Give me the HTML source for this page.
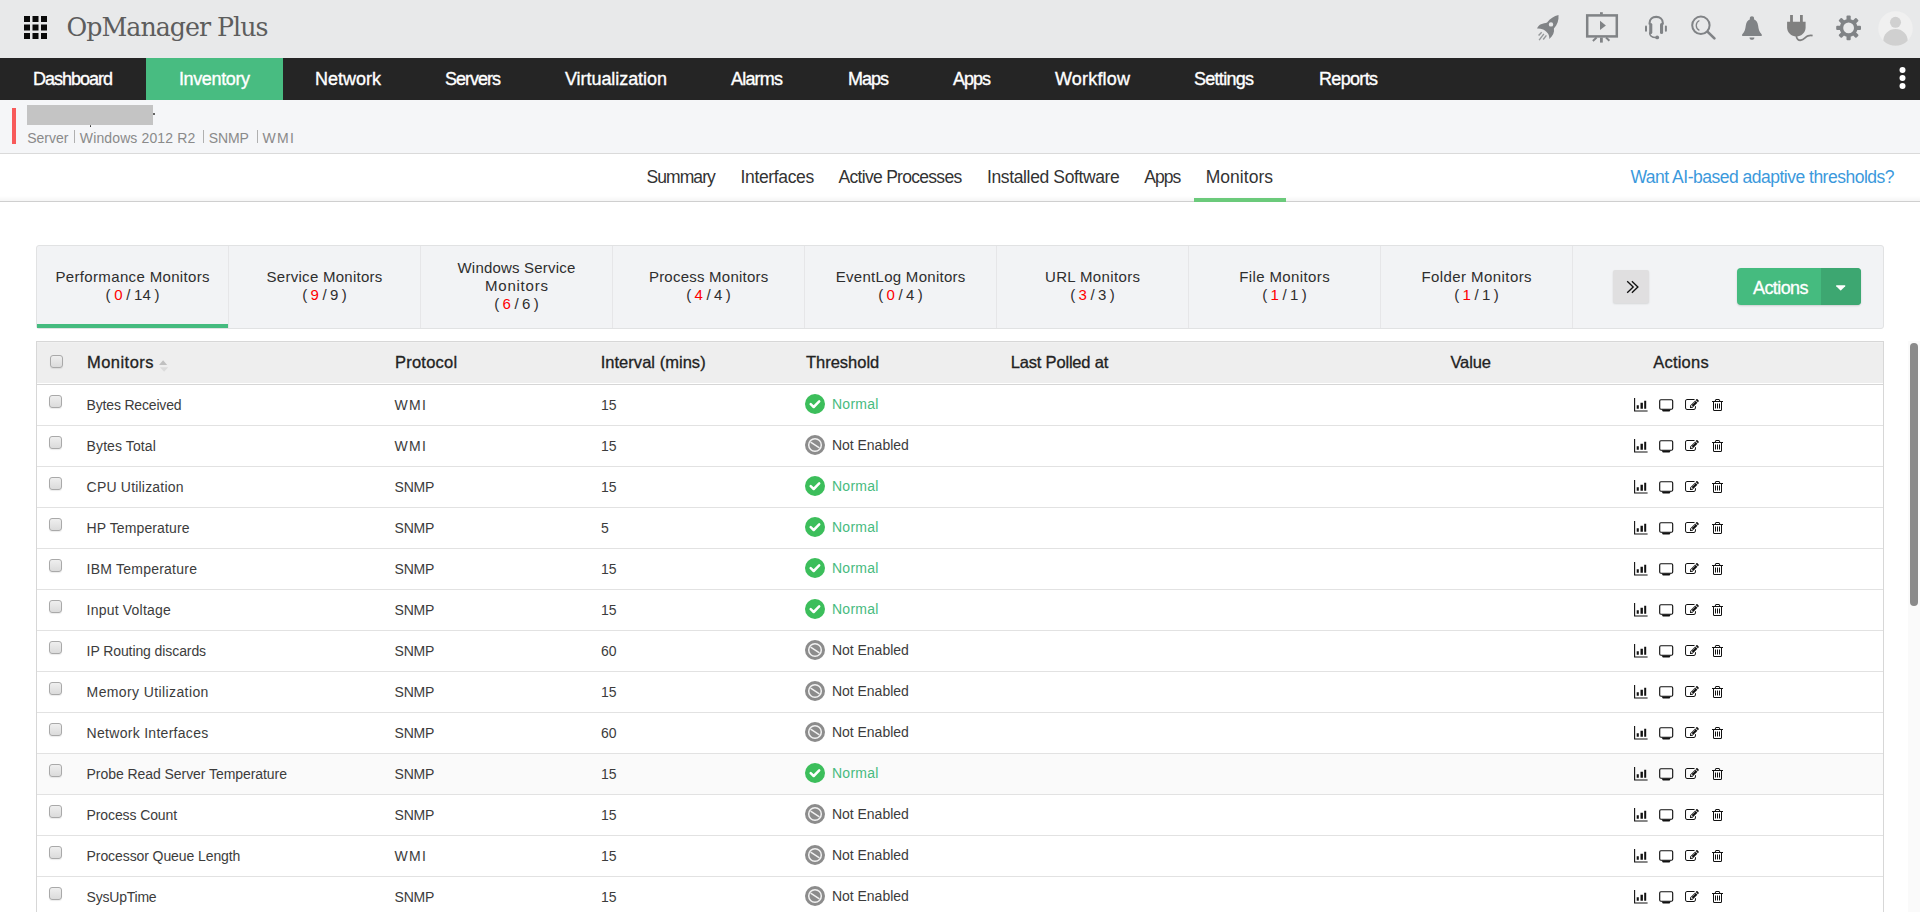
<!DOCTYPE html>
<html lang="en">
<head>
<meta charset="utf-8">
<title>OpManager Plus - Monitors</title>
<style>
*{box-sizing:border-box;margin:0;padding:0}
html,body{width:1920px;height:912px;overflow:hidden;background:#fff}
body{position:relative;font-family:"Liberation Sans",sans-serif;color:#333;font-size:14px}
.t{position:absolute;white-space:pre;display:block}
svg{position:absolute;display:block;overflow:visible}
#top{position:absolute;left:0;top:0;width:1920px;height:58px;background:#e8e9ea}
#nav{position:absolute;left:0;top:58px;width:1920px;height:42px;background:#252525}
#nav .on{position:absolute;left:146px;top:0;width:137px;height:42px;background:#48bc81}
#nav .t{color:#fff;-webkit-text-stroke:0.35px #fff}
#dev{position:absolute;left:0;top:100px;width:1920px;height:54px;background:#f5f6f8;border-bottom:1px solid #dadada}
#dev .bar{position:absolute;left:12px;top:8px;width:4px;height:36px;background:#f85a5a}
#dev .name{position:absolute;left:27px;top:5px;width:126px;height:20px;background:#c4c4c4}
#dev i{position:absolute;top:30px;width:1px;height:13px;background:#b0b0b0}
#dev u{position:absolute;width:1.5px;height:1.5px;background:#333;border-radius:1px}
#tabs{position:absolute;left:0;top:154px;width:1920px;height:48px;background:linear-gradient(#fff 0,#fff 42px,#f5f5f5 47px);border-bottom:1px solid #cfcfcf}
#tabs .ul{position:absolute;left:1194px;top:44px;width:92px;height:4px;background:#6bca7b}
#cat{position:absolute;left:36px;top:245px;width:1848px;height:84px;background:#f2f3f5;border:1px solid #e1e2e3;border-radius:3px}
#cat .c{position:absolute;top:0;width:192px;height:82px;border-right:1px solid #e6e6e8}
#cat .act{position:absolute;left:0;top:78px;width:191px;height:4px;background:#45bb7f}
#cat .t{color:#2e2e2e}
#cat .r{color:#f00}
#more{position:absolute;left:1576px;top:24px;width:36px;height:33px;background:#e0dfe0;border-radius:2px;box-shadow:0 1px 2px rgba(0,0,0,.12)}
#btn{position:absolute;left:1700px;top:22px;width:124px;height:37px;background:#45bb7f;border-radius:4px;overflow:hidden;box-shadow:0 1px 2px rgba(0,0,0,.15)}
#btn .dd{position:absolute;left:84px;top:0;width:40px;height:37px;background:#3da771}
#tbl{position:absolute;left:36px;top:341px;width:1848px;height:571px;overflow:hidden;border:1px solid #d7d7d7;border-bottom:0}
#th{position:absolute;left:0;top:0;width:1846px;height:43px;background:#eeeeee;border-bottom:1px solid #d6d6d6;box-shadow:inset 0 -1px 0 #fff,inset 0 1px 0 #f1f1f1}
#th .t{color:#222;-webkit-text-stroke:0.3px #222}
.row{position:absolute;left:0;width:1846px;height:41px;border-bottom:1px solid #e2e2e2}
.row.hov{background:#fafafa}
.cb{position:absolute;width:13px;height:13px;border:1px solid #a9a9a9;border-radius:3px;background:linear-gradient(#efefef,#dbdbdb);box-shadow:0 1px 1px rgba(0,0,0,.08)}
.ok .t{color:#47bb80}
#sb{position:absolute;left:1908px;top:341px;width:12px;height:571px;background:#fafafa}
#sb b{position:absolute;left:2px;top:2px;width:8px;height:263px;border-radius:4px;background:#8a8a8a}
</style>
</head>
<body>
<div id="top">
<svg style="left:24px;top:16px" width="23" height="23" viewBox="0 0 23 23"><g fill="#0a0a0a"><rect x="0" y="0" width="6" height="6"/><rect x="8.5" y="0" width="6" height="6"/><rect x="17" y="0" width="6" height="6"/><rect x="0" y="8.5" width="6" height="6"/><rect x="8.5" y="8.5" width="6" height="6"/><rect x="17" y="8.5" width="6" height="6"/><rect x="0" y="17" width="6" height="6"/><rect x="8.5" y="17" width="6" height="6"/><rect x="17" y="17" width="6" height="6"/></g></svg>
<span class="t" style="left:66.5px;top:13px;font-size:25.3px;line-height:29px;letter-spacing:-1.0px;color:#5d5d5d;font-family:'DejaVu Serif','Liberation Serif',serif;">OpManager Plus</span>
<svg style="left:1530px;top:8px" width="40" height="40" viewBox="0 0 40 40"><path fill="#808386" fill-rule="evenodd" d="M28.5 7C28.9 12 27.5 16.5 23.9 20.6C24.6 24.2 23 28 19.3 31.1C19.5 28.2 18.6 26.2 17.5 25C16 23.1 14.2 21.9 13.2 21.5C11 20.7 9 20.5 7 20.6C8 18.1 9.5 16.6 11 16.2C13 15.4 15.5 15.1 17.1 14.5C20 10.5 24 8 28.5 7ZM21 14.2A2.2 2.2 0 1 0 21 18.6A2.2 2.2 0 1 0 21 14.2Z"/><g stroke="#808386" stroke-width="1.4" stroke-opacity=".8"><path d="M11.7 24.2L8.6 27.5"/><path d="M13.9 25.8L9.1 32.1"/><path d="M16.4 27.4L13.2 31.5"/></g></svg>
<svg style="left:1580px;top:8px" width="50" height="40" viewBox="0 0 50 40"><rect x="7.2" y="7.4" width="29.6" height="21" fill="none" stroke="#808386" stroke-width="2.5"/><rect x="20" y="4.2" width="2.8" height="2.4" fill="#808386"/><rect x="20" y="29.6" width="2.8" height="5" fill="#808386"/><path d="M16.6 29.6L12.9 32.9M26 29.6L29.4 32.8" stroke="#808386" stroke-width="2"/><path d="M20 12.7V22.1L25.9 17.4Z" fill="#808386"/></svg>
<svg style="left:1636px;top:8px" width="40" height="40" viewBox="0 0 40 40"><path d="M13.6 16.5V15C13.6 11.2 16.4 8.9 20.2 8.9C24 8.9 26.8 11.2 26.8 15V16.5" fill="none" stroke="#808386" stroke-width="2.1"/><rect x="13.2" y="14.9" width="3.1" height="11" rx="1.5" fill="#808386"/><rect x="24" y="14.9" width="3.1" height="11" rx="1.5" fill="#808386"/><rect x="9" y="17.5" width="2" height="6.2" rx="1" fill="#808386"/><rect x="28.9" y="17.5" width="2" height="6.2" rx="1" fill="#808386"/><path d="M13.6 24.5C13.6 28 15.5 29.5 20 29.5" fill="none" stroke="#808386" stroke-width="1.5"/><circle cx="21.2" cy="29.4" r="1.9" fill="#808386"/></svg>
<svg style="left:1684px;top:8px" width="40" height="40" viewBox="0 0 40 40"><circle cx="16.9" cy="17.3" r="8.7" fill="none" stroke="#808386" stroke-width="2"/><path d="M23.7 23.9L30.4 30.4" stroke="#808386" stroke-width="2.7" stroke-linecap="round"/><path d="M15.4 12.5C11.2 14.5 11.2 20.4 15.4 22.4" fill="none" stroke="#808386" stroke-width="1.3"/></svg>
<svg style="left:1732px;top:8px" width="40" height="40" viewBox="0 0 40 40"><path fill="#808386" d="M19.95 8.3C21.2 8.3 22.1 9.2 22.1 10.4C22.1 10.7 22 11 21.9 11.3C24.3 12.2 25.6 14.4 26.1 17.5C26.6 21 27 23.8 29.6 26.2C30 26.6 29.9 28.1 29.2 28.1H10.7C10 28.1 9.9 26.6 10.3 26.2C12.9 23.8 13.3 21 13.8 17.5C14.3 14.4 15.6 12.2 18 11.3C17.9 11 17.8 10.7 17.8 10.4C17.8 9.2 18.7 8.3 19.95 8.3Z"/><path fill="#808386" d="M17.5 29.4H22.4C22.4 30.8 21.4 31.7 19.95 31.7C18.5 31.7 17.5 30.8 17.5 29.4Z"/></svg>
<svg style="left:1782px;top:8px" width="40" height="40" viewBox="0 0 40 40"><rect x="8.1" y="7" width="2.8" height="7.5" fill="#808080"/><rect x="18" y="7" width="2.8" height="7.5" fill="#808080"/><path fill="#808080" d="M5.1 13.8H23.6V19.5C23.6 24.6 19.5 28.4 14.35 28.4C9.2 28.4 5.1 24.6 5.1 19.5Z"/><path d="M14.3 27.5C14.5 31 16.5 32.6 19 32.2C22 31.7 23.5 28.6 26 27.8C28 27.2 29.5 27.3 30.6 27.6" fill="none" stroke="#808080" stroke-width="1.8"/></svg>
<svg style="left:1828px;top:8px" width="40" height="40" viewBox="0 0 40 40"><g transform="translate(20.6 19.9)" fill="#808386"><rect x="-2.1" y="-12.4" width="4.2" height="5.5" rx="1" transform="rotate(0)"/><rect x="-2.1" y="-12.4" width="4.2" height="5.5" rx="1" transform="rotate(45)"/><rect x="-2.1" y="-12.4" width="4.2" height="5.5" rx="1" transform="rotate(90)"/><rect x="-2.1" y="-12.4" width="4.2" height="5.5" rx="1" transform="rotate(135)"/><rect x="-2.1" y="-12.4" width="4.2" height="5.5" rx="1" transform="rotate(180)"/><rect x="-2.1" y="-12.4" width="4.2" height="5.5" rx="1" transform="rotate(225)"/><rect x="-2.1" y="-12.4" width="4.2" height="5.5" rx="1" transform="rotate(270)"/><rect x="-2.1" y="-12.4" width="4.2" height="5.5" rx="1" transform="rotate(315)"/></g><circle cx="20.6" cy="19.9" r="7.2" fill="none" stroke="#808386" stroke-width="3.6"/></svg>
<svg style="left:1878px;top:11px" width="35" height="35" viewBox="0 0 35 35"><clipPath id="av"><circle cx="17.5" cy="17.5" r="17.3"/></clipPath><circle cx="17.5" cy="17.5" r="17.3" fill="#f0f0f0"/><g clip-path="url(#av)" fill="#d0d0d0"><circle cx="17.5" cy="11.3" r="5.5"/><ellipse cx="17.5" cy="29.8" rx="12.2" ry="11.7"/></g></svg>
</div>
<div id="nav"><div class="on"></div>
<span class="t" style="left:33px;top:11px;font-size:18px;line-height:20px;letter-spacing:-1.01px;">Dashboard</span>
<span class="t" style="left:179px;top:11px;font-size:18px;line-height:20px;letter-spacing:-0.38px;">Inventory</span>
<span class="t" style="left:315px;top:11px;font-size:18px;line-height:20px;">Network</span>
<span class="t" style="left:445px;top:11px;font-size:18px;line-height:20px;letter-spacing:-1.0px;">Servers</span>
<span class="t" style="left:565px;top:11px;font-size:18px;line-height:20px;letter-spacing:-0.06px;">Virtualization</span>
<span class="t" style="left:731px;top:11px;font-size:18px;line-height:20px;letter-spacing:-0.8px;">Alarms</span>
<span class="t" style="left:848px;top:11px;font-size:18px;line-height:20px;letter-spacing:-1.01px;">Maps</span>
<span class="t" style="left:953px;top:11px;font-size:18px;line-height:20px;letter-spacing:-1.01px;">Apps</span>
<span class="t" style="left:1055px;top:11px;font-size:18px;line-height:20px;letter-spacing:0.19px;">Workflow</span>
<span class="t" style="left:1194px;top:11px;font-size:18px;line-height:20px;letter-spacing:-0.72px;">Settings</span>
<span class="t" style="left:1319px;top:11px;font-size:18px;line-height:20px;letter-spacing:-0.67px;">Reports</span>
<svg style="left:1899px;top:8px" width="7" height="24" viewBox="0 0 7 24"><g fill="#fff"><circle cx="3.5" cy="3.9" r="3"/><circle cx="3.5" cy="12" r="3"/><circle cx="3.5" cy="20.1" r="3"/></g></svg>
</div>
<div id="dev"><div class="bar"></div><div class="name"></div><u style="left:153.3px;top:13.2px"></u><u style="left:89.5px;top:25px"></u>
<span class="t" style="left:27.3px;top:30px;font-size:14px;line-height:16px;letter-spacing:-0.03px;color:#8a8a8a;">Server</span>
<span class="t" style="left:79.8px;top:30px;font-size:14px;line-height:16px;letter-spacing:0.13px;color:#8a8a8a;">Windows 2012 R2</span>
<span class="t" style="left:208.8px;top:30px;font-size:14px;line-height:16px;letter-spacing:-0.15px;color:#8a8a8a;">SNMP</span>
<span class="t" style="left:262.6px;top:30px;font-size:14px;line-height:16px;letter-spacing:1.27px;color:#8a8a8a;">WMI</span>
<i style="left:74px"></i>
<i style="left:203px"></i>
<i style="left:257px"></i>
</div>
<div id="tabs">
<span class="t" style="left:646.4px;top:13px;font-size:17.5px;line-height:20px;letter-spacing:-0.91px;color:#333;">Summary</span>
<span class="t" style="left:740.6px;top:13px;font-size:17.5px;line-height:20px;letter-spacing:-0.36px;color:#333;">Interfaces</span>
<span class="t" style="left:838.6px;top:13px;font-size:17.5px;line-height:20px;letter-spacing:-0.71px;color:#333;">Active Processes</span>
<span class="t" style="left:987px;top:13px;font-size:17.5px;line-height:20px;letter-spacing:-0.37px;color:#333;">Installed Software</span>
<span class="t" style="left:1144.3px;top:13px;font-size:17.5px;line-height:20px;letter-spacing:-0.96px;color:#333;">Apps</span>
<span class="t" style="left:1205.7px;top:13px;font-size:17.5px;line-height:20px;letter-spacing:0.03px;color:#333;">Monitors</span>
<span class="t" style="left:1630.5px;top:13px;font-size:17.5px;line-height:20px;letter-spacing:-0.5px;color:#3b99dc;">Want AI-based adaptive thresholds?</span>
<div class="ul"></div></div>
<div id="cat">
<div class="c" style="left:0px">
<span class="t" style="left:18.4px;top:22px;font-size:15px;line-height:17px;letter-spacing:0.35px;">Performance Monitors</span>
<span class="t" style="left:68.5px;top:40px;font-size:15px;line-height:17px;">(</span>
<span class="t r" style="left:77.2px;top:40px;font-size:15px;line-height:17px;">0</span>
<span class="t" style="left:89.2px;top:40px;font-size:15px;line-height:17px;">/</span>
<span class="t" style="left:97.1px;top:40px;font-size:15px;line-height:17px;">14</span>
<span class="t" style="left:117.5px;top:40px;font-size:15px;line-height:17px;">)</span>
</div>
<div class="c" style="left:192px">
<span class="t" style="left:37.6px;top:22px;font-size:15px;line-height:17px;letter-spacing:0.27px;">Service Monitors</span>
<span class="t" style="left:73.2px;top:40px;font-size:15px;line-height:17px;">(</span>
<span class="t r" style="left:81.6px;top:40px;font-size:15px;line-height:17px;">9</span>
<span class="t" style="left:93.4px;top:40px;font-size:15px;line-height:17px;">/</span>
<span class="t" style="left:101.0px;top:40px;font-size:15px;line-height:17px;">9</span>
<span class="t" style="left:112.8px;top:40px;font-size:15px;line-height:17px;">)</span>
</div>
<div class="c" style="left:384px">
<span class="t" style="left:36.5px;top:13px;font-size:15px;line-height:17px;letter-spacing:0.2px;">Windows Service</span>
<span class="t" style="left:64.0px;top:31px;font-size:15px;line-height:17px;letter-spacing:0.77px;">Monitors</span>
<span class="t" style="left:73.2px;top:49px;font-size:15px;line-height:17px;">(</span>
<span class="t r" style="left:81.6px;top:49px;font-size:15px;line-height:17px;">6</span>
<span class="t" style="left:93.4px;top:49px;font-size:15px;line-height:17px;">/</span>
<span class="t" style="left:101.0px;top:49px;font-size:15px;line-height:17px;">6</span>
<span class="t" style="left:112.8px;top:49px;font-size:15px;line-height:17px;">)</span>
</div>
<div class="c" style="left:576px">
<span class="t" style="left:35.9px;top:22px;font-size:15px;line-height:17px;letter-spacing:0.23px;">Process Monitors</span>
<span class="t" style="left:73.2px;top:40px;font-size:15px;line-height:17px;">(</span>
<span class="t r" style="left:81.6px;top:40px;font-size:15px;line-height:17px;">4</span>
<span class="t" style="left:93.4px;top:40px;font-size:15px;line-height:17px;">/</span>
<span class="t" style="left:101.0px;top:40px;font-size:15px;line-height:17px;">4</span>
<span class="t" style="left:112.8px;top:40px;font-size:15px;line-height:17px;">)</span>
</div>
<div class="c" style="left:768px">
<span class="t" style="left:30.8px;top:22px;font-size:15px;line-height:17px;letter-spacing:0.28px;">EventLog Monitors</span>
<span class="t" style="left:73.2px;top:40px;font-size:15px;line-height:17px;">(</span>
<span class="t r" style="left:81.6px;top:40px;font-size:15px;line-height:17px;">0</span>
<span class="t" style="left:93.4px;top:40px;font-size:15px;line-height:17px;">/</span>
<span class="t" style="left:101.0px;top:40px;font-size:15px;line-height:17px;">4</span>
<span class="t" style="left:112.8px;top:40px;font-size:15px;line-height:17px;">)</span>
</div>
<div class="c" style="left:960px">
<span class="t" style="left:48.0px;top:22px;font-size:15px;line-height:17px;letter-spacing:0.35px;">URL Monitors</span>
<span class="t" style="left:73.2px;top:40px;font-size:15px;line-height:17px;">(</span>
<span class="t r" style="left:81.6px;top:40px;font-size:15px;line-height:17px;">3</span>
<span class="t" style="left:93.4px;top:40px;font-size:15px;line-height:17px;">/</span>
<span class="t" style="left:101.0px;top:40px;font-size:15px;line-height:17px;">3</span>
<span class="t" style="left:112.8px;top:40px;font-size:15px;line-height:17px;">)</span>
</div>
<div class="c" style="left:1152px">
<span class="t" style="left:50.2px;top:22px;font-size:15px;line-height:17px;letter-spacing:0.39px;">File Monitors</span>
<span class="t" style="left:73.2px;top:40px;font-size:15px;line-height:17px;">(</span>
<span class="t r" style="left:81.6px;top:40px;font-size:15px;line-height:17px;">1</span>
<span class="t" style="left:93.4px;top:40px;font-size:15px;line-height:17px;">/</span>
<span class="t" style="left:101.0px;top:40px;font-size:15px;line-height:17px;">1</span>
<span class="t" style="left:112.8px;top:40px;font-size:15px;line-height:17px;">)</span>
</div>
<div class="c" style="left:1344px">
<span class="t" style="left:40.4px;top:22px;font-size:15px;line-height:17px;letter-spacing:0.43px;">Folder Monitors</span>
<span class="t" style="left:73.2px;top:40px;font-size:15px;line-height:17px;">(</span>
<span class="t r" style="left:81.6px;top:40px;font-size:15px;line-height:17px;">1</span>
<span class="t" style="left:93.4px;top:40px;font-size:15px;line-height:17px;">/</span>
<span class="t" style="left:101.0px;top:40px;font-size:15px;line-height:17px;">1</span>
<span class="t" style="left:112.8px;top:40px;font-size:15px;line-height:17px;">)</span>
</div>
<div class="act"></div>
<div id="more"><svg style="left:0;top:0" width="36" height="33" viewBox="0 0 36 33"><path d="M14.2 11.2L20.2 16.9L14.2 22.7M18.9 11.2L24.9 16.9L18.9 22.7" fill="none" stroke="#111" stroke-width="1.35"/></svg></div>
<div id="btn"><div class="dd"></div><span class="t" style="left:16px;top:10px;font-size:18px;line-height:20px;letter-spacing:-0.59px;color:#fff;-webkit-text-stroke:0.3px #fff;">Actions</span><svg style="left:98.5px;top:17px" width="9.4" height="5.6" viewBox="0 0 1024 576"><path fill="#fff" d="M1024 64C1024 29 995 0 960 0H64C29 0 0 29 0 64C0 81 7 97 19 109L467 557C479 569 495 576 512 576C529 576 545 569 557 557L1005 109C1017 97 1024 81 1024 64Z"/></svg></div>
</div>
<div id="tbl"><div id="th">
<div class="cb" style="left:13px;top:13px"></div>
<span class="t" style="left:49.9px;top:11px;font-size:16.5px;line-height:18px;letter-spacing:0.49px;">Monitors</span>
<span class="t" style="left:357.9px;top:11px;font-size:16.5px;line-height:18px;letter-spacing:0.25px;">Protocol</span>
<span class="t" style="left:563.7px;top:11px;font-size:16.5px;line-height:18px;letter-spacing:0.03px;">Interval (mins)</span>
<span class="t" style="left:769px;top:11px;font-size:16.5px;line-height:18px;letter-spacing:-0.02px;">Threshold</span>
<span class="t" style="left:973.8px;top:11px;font-size:16.5px;line-height:18px;letter-spacing:-0.19px;">Last Polled at</span>
<span class="t" style="left:1413.4px;top:11px;font-size:16.5px;line-height:18px;letter-spacing:-0.1px;">Value</span>
<span class="t" style="left:1616.2px;top:11px;font-size:16.5px;line-height:18px;letter-spacing:0.23px;">Actions</span>
<svg style="left:121.80000000000001px;top:18px" width="10" height="12" viewBox="0 0 10 12"><path d="M0 4.9L4.1 0.2L8.2 4.9Z" fill="#c0c0c0"/><path d="M1 7.2L5.1 11.8L9.2 7.2Z" fill="#dbdbdb"/></svg>
</div>
<div class="row ok" style="top:43px">
<div class="cb" style="left:12px;top:10px"></div>
<span class="t n" style="left:49.6px;top:12px;font-size:14px;line-height:16px;letter-spacing:-0.18px;color:#3c3c3c;">Bytes Received</span>
<span class="t n" style="left:357.5px;top:12px;font-size:14px;line-height:16px;letter-spacing:1.27px;color:#3c3c3c;">WMI</span>
<span class="t n" style="left:564px;top:12px;font-size:14px;line-height:16px;color:#3c3c3c;">15</span>
<svg style="left:768px;top:9px" width="20" height="20" viewBox="0 0 20 20"><circle cx="10" cy="10" r="10" fill="#3cbe5b"/><path d="M5.7 10.2L8.7 13L14.2 7.4" fill="none" stroke="#fff" stroke-width="2.5" stroke-linecap="round" stroke-linejoin="round"/></svg>
<span class="t" style="left:795px;top:11px;font-size:14px;line-height:16px;letter-spacing:0.25px;">Normal</span>
<svg style="left:1597px;top:13px" width="14" height="14" viewBox="0 0 14 14"><path d="M0.6 0.1V13H13.6" fill="none" stroke="#111" stroke-width="1.1"/><path fill="#111" d="M2.7 7.2H4.8V10.7H2.7ZM6.5 4.7H8.9V10.7H6.5ZM10.2 2.7H12.2V10.7H10.2Z"/></svg>
<svg style="left:1622px;top:13.6px" width="14.4" height="13" viewBox="0 0 14.4 13"><rect x="0.7" y="0.7" width="13" height="9.6" rx="1.2" fill="none" stroke="#111" stroke-width="1.15"/><path fill="#111" d="M2.6 10.6H11.8L10.6 12.4H3.8Z"/></svg>
<svg style="left:1648.4px;top:13.8px" width="13.9" height="10.9" viewBox="0 0 1784 1408"><path fill="#111" d="M888 1056H832V960H736V904L852 788L1004 940ZM1328 336C1337 345 1336 360 1327 369L977 719C968 728 953 729 944 720C935 711 936 696 945 687L1295 337C1304 328 1319 327 1328 336ZM1408 930C1408 917 1400 906 1388 901C1376 896 1363 898 1353 908L1289 972C1283 978 1280 986 1280 994V1120C1280 1208 1208 1280 1120 1280H288C200 1280 128 1208 128 1120V288C128 200 200 128 288 128H1120C1135 128 1150 130 1165 134C1176 138 1188 135 1197 126L1246 77C1254 69 1257 59 1255 48C1253 38 1246 29 1237 25C1200 8 1160 0 1120 0H288C129 0 0 129 0 288V1120C0 1279 129 1408 288 1408H1120C1279 1408 1408 1279 1408 1120ZM1312 192 640 864V1152H928L1600 480ZM1756 324C1793 287 1793 225 1756 188L1604 36C1567 -1 1505 -1 1468 36L1376 128L1664 416L1756 324Z"/></svg>
<svg style="left:1675px;top:13.8px" width="11" height="12" viewBox="0 0 1408 1536"><path fill="#111" d="M512 608C512 590 498 576 480 576H416C398 576 384 590 384 608V1184C384 1202 398 1216 416 1216H480C498 1216 512 1202 512 1184ZM768 608C768 590 754 576 736 576H672C654 576 640 590 640 608V1184C640 1202 654 1216 672 1216H736C754 1216 768 1202 768 1184ZM1024 608C1024 590 1010 576 992 576H928C910 576 896 590 896 608V1184C896 1202 910 1216 928 1216H992C1010 1216 1024 1202 1024 1184ZM1152 1332C1152 1380 1125 1408 1120 1408H288C283 1408 256 1380 256 1332V384H1152V1332ZM480 256 529 139C532 135 540 129 546 128H863C868 129 877 135 880 139L928 256ZM1408 288C1408 270 1394 256 1376 256H1067L997 89C977 40 917 0 864 0H544C491 0 431 40 411 89L341 256H32C14 256 0 270 0 288V352C0 370 14 384 32 384H128V1336C128 1446 200 1536 288 1536H1120C1208 1536 1280 1442 1280 1332V384H1376C1394 384 1408 370 1408 352Z"/></svg>
</div>
<div class="row" style="top:84px">
<div class="cb" style="left:12px;top:10px"></div>
<span class="t n" style="left:49.6px;top:12px;font-size:14px;line-height:16px;letter-spacing:0.1px;color:#3c3c3c;">Bytes Total</span>
<span class="t n" style="left:357.5px;top:12px;font-size:14px;line-height:16px;letter-spacing:1.27px;color:#3c3c3c;">WMI</span>
<span class="t n" style="left:564px;top:12px;font-size:14px;line-height:16px;color:#3c3c3c;">15</span>
<svg style="left:768px;top:9px" width="20" height="20" viewBox="0 0 20 20"><circle cx="10" cy="10" r="10" fill="#8c8c8c"/><circle cx="10" cy="10" r="6.3" fill="none" stroke="#f2f2f2" stroke-width="1.5"/><path d="M5.6 7.2L14.4 12.8" stroke="#f2f2f2" stroke-width="1.5"/></svg>
<span class="t n" style="left:795px;top:11px;font-size:14px;line-height:16px;letter-spacing:-0.03px;color:#3c3c3c;">Not Enabled</span>
<svg style="left:1597px;top:13px" width="14" height="14" viewBox="0 0 14 14"><path d="M0.6 0.1V13H13.6" fill="none" stroke="#111" stroke-width="1.1"/><path fill="#111" d="M2.7 7.2H4.8V10.7H2.7ZM6.5 4.7H8.9V10.7H6.5ZM10.2 2.7H12.2V10.7H10.2Z"/></svg>
<svg style="left:1622px;top:13.6px" width="14.4" height="13" viewBox="0 0 14.4 13"><rect x="0.7" y="0.7" width="13" height="9.6" rx="1.2" fill="none" stroke="#111" stroke-width="1.15"/><path fill="#111" d="M2.6 10.6H11.8L10.6 12.4H3.8Z"/></svg>
<svg style="left:1648.4px;top:13.8px" width="13.9" height="10.9" viewBox="0 0 1784 1408"><path fill="#111" d="M888 1056H832V960H736V904L852 788L1004 940ZM1328 336C1337 345 1336 360 1327 369L977 719C968 728 953 729 944 720C935 711 936 696 945 687L1295 337C1304 328 1319 327 1328 336ZM1408 930C1408 917 1400 906 1388 901C1376 896 1363 898 1353 908L1289 972C1283 978 1280 986 1280 994V1120C1280 1208 1208 1280 1120 1280H288C200 1280 128 1208 128 1120V288C128 200 200 128 288 128H1120C1135 128 1150 130 1165 134C1176 138 1188 135 1197 126L1246 77C1254 69 1257 59 1255 48C1253 38 1246 29 1237 25C1200 8 1160 0 1120 0H288C129 0 0 129 0 288V1120C0 1279 129 1408 288 1408H1120C1279 1408 1408 1279 1408 1120ZM1312 192 640 864V1152H928L1600 480ZM1756 324C1793 287 1793 225 1756 188L1604 36C1567 -1 1505 -1 1468 36L1376 128L1664 416L1756 324Z"/></svg>
<svg style="left:1675px;top:13.8px" width="11" height="12" viewBox="0 0 1408 1536"><path fill="#111" d="M512 608C512 590 498 576 480 576H416C398 576 384 590 384 608V1184C384 1202 398 1216 416 1216H480C498 1216 512 1202 512 1184ZM768 608C768 590 754 576 736 576H672C654 576 640 590 640 608V1184C640 1202 654 1216 672 1216H736C754 1216 768 1202 768 1184ZM1024 608C1024 590 1010 576 992 576H928C910 576 896 590 896 608V1184C896 1202 910 1216 928 1216H992C1010 1216 1024 1202 1024 1184ZM1152 1332C1152 1380 1125 1408 1120 1408H288C283 1408 256 1380 256 1332V384H1152V1332ZM480 256 529 139C532 135 540 129 546 128H863C868 129 877 135 880 139L928 256ZM1408 288C1408 270 1394 256 1376 256H1067L997 89C977 40 917 0 864 0H544C491 0 431 40 411 89L341 256H32C14 256 0 270 0 288V352C0 370 14 384 32 384H128V1336C128 1446 200 1536 288 1536H1120C1208 1536 1280 1442 1280 1332V384H1376C1394 384 1408 370 1408 352Z"/></svg>
</div>
<div class="row ok" style="top:125px">
<div class="cb" style="left:12px;top:10px"></div>
<span class="t n" style="left:49.6px;top:12px;font-size:14px;line-height:16px;letter-spacing:0.2px;color:#3c3c3c;">CPU Utilization</span>
<span class="t n" style="left:357.5px;top:12px;font-size:14px;line-height:16px;letter-spacing:-0.18px;color:#3c3c3c;">SNMP</span>
<span class="t n" style="left:564px;top:12px;font-size:14px;line-height:16px;color:#3c3c3c;">15</span>
<svg style="left:768px;top:9px" width="20" height="20" viewBox="0 0 20 20"><circle cx="10" cy="10" r="10" fill="#3cbe5b"/><path d="M5.7 10.2L8.7 13L14.2 7.4" fill="none" stroke="#fff" stroke-width="2.5" stroke-linecap="round" stroke-linejoin="round"/></svg>
<span class="t" style="left:795px;top:11px;font-size:14px;line-height:16px;letter-spacing:0.25px;">Normal</span>
<svg style="left:1597px;top:13px" width="14" height="14" viewBox="0 0 14 14"><path d="M0.6 0.1V13H13.6" fill="none" stroke="#111" stroke-width="1.1"/><path fill="#111" d="M2.7 7.2H4.8V10.7H2.7ZM6.5 4.7H8.9V10.7H6.5ZM10.2 2.7H12.2V10.7H10.2Z"/></svg>
<svg style="left:1622px;top:13.6px" width="14.4" height="13" viewBox="0 0 14.4 13"><rect x="0.7" y="0.7" width="13" height="9.6" rx="1.2" fill="none" stroke="#111" stroke-width="1.15"/><path fill="#111" d="M2.6 10.6H11.8L10.6 12.4H3.8Z"/></svg>
<svg style="left:1648.4px;top:13.8px" width="13.9" height="10.9" viewBox="0 0 1784 1408"><path fill="#111" d="M888 1056H832V960H736V904L852 788L1004 940ZM1328 336C1337 345 1336 360 1327 369L977 719C968 728 953 729 944 720C935 711 936 696 945 687L1295 337C1304 328 1319 327 1328 336ZM1408 930C1408 917 1400 906 1388 901C1376 896 1363 898 1353 908L1289 972C1283 978 1280 986 1280 994V1120C1280 1208 1208 1280 1120 1280H288C200 1280 128 1208 128 1120V288C128 200 200 128 288 128H1120C1135 128 1150 130 1165 134C1176 138 1188 135 1197 126L1246 77C1254 69 1257 59 1255 48C1253 38 1246 29 1237 25C1200 8 1160 0 1120 0H288C129 0 0 129 0 288V1120C0 1279 129 1408 288 1408H1120C1279 1408 1408 1279 1408 1120ZM1312 192 640 864V1152H928L1600 480ZM1756 324C1793 287 1793 225 1756 188L1604 36C1567 -1 1505 -1 1468 36L1376 128L1664 416L1756 324Z"/></svg>
<svg style="left:1675px;top:13.8px" width="11" height="12" viewBox="0 0 1408 1536"><path fill="#111" d="M512 608C512 590 498 576 480 576H416C398 576 384 590 384 608V1184C384 1202 398 1216 416 1216H480C498 1216 512 1202 512 1184ZM768 608C768 590 754 576 736 576H672C654 576 640 590 640 608V1184C640 1202 654 1216 672 1216H736C754 1216 768 1202 768 1184ZM1024 608C1024 590 1010 576 992 576H928C910 576 896 590 896 608V1184C896 1202 910 1216 928 1216H992C1010 1216 1024 1202 1024 1184ZM1152 1332C1152 1380 1125 1408 1120 1408H288C283 1408 256 1380 256 1332V384H1152V1332ZM480 256 529 139C532 135 540 129 546 128H863C868 129 877 135 880 139L928 256ZM1408 288C1408 270 1394 256 1376 256H1067L997 89C977 40 917 0 864 0H544C491 0 431 40 411 89L341 256H32C14 256 0 270 0 288V352C0 370 14 384 32 384H128V1336C128 1446 200 1536 288 1536H1120C1208 1536 1280 1442 1280 1332V384H1376C1394 384 1408 370 1408 352Z"/></svg>
</div>
<div class="row ok" style="top:166px">
<div class="cb" style="left:12px;top:10px"></div>
<span class="t n" style="left:49.6px;top:12px;font-size:14px;line-height:16px;letter-spacing:0.11px;color:#3c3c3c;">HP Temperature</span>
<span class="t n" style="left:357.5px;top:12px;font-size:14px;line-height:16px;letter-spacing:-0.18px;color:#3c3c3c;">SNMP</span>
<span class="t n" style="left:564px;top:12px;font-size:14px;line-height:16px;color:#3c3c3c;">5</span>
<svg style="left:768px;top:9px" width="20" height="20" viewBox="0 0 20 20"><circle cx="10" cy="10" r="10" fill="#3cbe5b"/><path d="M5.7 10.2L8.7 13L14.2 7.4" fill="none" stroke="#fff" stroke-width="2.5" stroke-linecap="round" stroke-linejoin="round"/></svg>
<span class="t" style="left:795px;top:11px;font-size:14px;line-height:16px;letter-spacing:0.25px;">Normal</span>
<svg style="left:1597px;top:13px" width="14" height="14" viewBox="0 0 14 14"><path d="M0.6 0.1V13H13.6" fill="none" stroke="#111" stroke-width="1.1"/><path fill="#111" d="M2.7 7.2H4.8V10.7H2.7ZM6.5 4.7H8.9V10.7H6.5ZM10.2 2.7H12.2V10.7H10.2Z"/></svg>
<svg style="left:1622px;top:13.6px" width="14.4" height="13" viewBox="0 0 14.4 13"><rect x="0.7" y="0.7" width="13" height="9.6" rx="1.2" fill="none" stroke="#111" stroke-width="1.15"/><path fill="#111" d="M2.6 10.6H11.8L10.6 12.4H3.8Z"/></svg>
<svg style="left:1648.4px;top:13.8px" width="13.9" height="10.9" viewBox="0 0 1784 1408"><path fill="#111" d="M888 1056H832V960H736V904L852 788L1004 940ZM1328 336C1337 345 1336 360 1327 369L977 719C968 728 953 729 944 720C935 711 936 696 945 687L1295 337C1304 328 1319 327 1328 336ZM1408 930C1408 917 1400 906 1388 901C1376 896 1363 898 1353 908L1289 972C1283 978 1280 986 1280 994V1120C1280 1208 1208 1280 1120 1280H288C200 1280 128 1208 128 1120V288C128 200 200 128 288 128H1120C1135 128 1150 130 1165 134C1176 138 1188 135 1197 126L1246 77C1254 69 1257 59 1255 48C1253 38 1246 29 1237 25C1200 8 1160 0 1120 0H288C129 0 0 129 0 288V1120C0 1279 129 1408 288 1408H1120C1279 1408 1408 1279 1408 1120ZM1312 192 640 864V1152H928L1600 480ZM1756 324C1793 287 1793 225 1756 188L1604 36C1567 -1 1505 -1 1468 36L1376 128L1664 416L1756 324Z"/></svg>
<svg style="left:1675px;top:13.8px" width="11" height="12" viewBox="0 0 1408 1536"><path fill="#111" d="M512 608C512 590 498 576 480 576H416C398 576 384 590 384 608V1184C384 1202 398 1216 416 1216H480C498 1216 512 1202 512 1184ZM768 608C768 590 754 576 736 576H672C654 576 640 590 640 608V1184C640 1202 654 1216 672 1216H736C754 1216 768 1202 768 1184ZM1024 608C1024 590 1010 576 992 576H928C910 576 896 590 896 608V1184C896 1202 910 1216 928 1216H992C1010 1216 1024 1202 1024 1184ZM1152 1332C1152 1380 1125 1408 1120 1408H288C283 1408 256 1380 256 1332V384H1152V1332ZM480 256 529 139C532 135 540 129 546 128H863C868 129 877 135 880 139L928 256ZM1408 288C1408 270 1394 256 1376 256H1067L997 89C977 40 917 0 864 0H544C491 0 431 40 411 89L341 256H32C14 256 0 270 0 288V352C0 370 14 384 32 384H128V1336C128 1446 200 1536 288 1536H1120C1208 1536 1280 1442 1280 1332V384H1376C1394 384 1408 370 1408 352Z"/></svg>
</div>
<div class="row ok" style="top:207px">
<div class="cb" style="left:12px;top:10px"></div>
<span class="t n" style="left:49.6px;top:12px;font-size:14px;line-height:16px;letter-spacing:0.23px;color:#3c3c3c;">IBM Temperature</span>
<span class="t n" style="left:357.5px;top:12px;font-size:14px;line-height:16px;letter-spacing:-0.18px;color:#3c3c3c;">SNMP</span>
<span class="t n" style="left:564px;top:12px;font-size:14px;line-height:16px;color:#3c3c3c;">15</span>
<svg style="left:768px;top:9px" width="20" height="20" viewBox="0 0 20 20"><circle cx="10" cy="10" r="10" fill="#3cbe5b"/><path d="M5.7 10.2L8.7 13L14.2 7.4" fill="none" stroke="#fff" stroke-width="2.5" stroke-linecap="round" stroke-linejoin="round"/></svg>
<span class="t" style="left:795px;top:11px;font-size:14px;line-height:16px;letter-spacing:0.25px;">Normal</span>
<svg style="left:1597px;top:13px" width="14" height="14" viewBox="0 0 14 14"><path d="M0.6 0.1V13H13.6" fill="none" stroke="#111" stroke-width="1.1"/><path fill="#111" d="M2.7 7.2H4.8V10.7H2.7ZM6.5 4.7H8.9V10.7H6.5ZM10.2 2.7H12.2V10.7H10.2Z"/></svg>
<svg style="left:1622px;top:13.6px" width="14.4" height="13" viewBox="0 0 14.4 13"><rect x="0.7" y="0.7" width="13" height="9.6" rx="1.2" fill="none" stroke="#111" stroke-width="1.15"/><path fill="#111" d="M2.6 10.6H11.8L10.6 12.4H3.8Z"/></svg>
<svg style="left:1648.4px;top:13.8px" width="13.9" height="10.9" viewBox="0 0 1784 1408"><path fill="#111" d="M888 1056H832V960H736V904L852 788L1004 940ZM1328 336C1337 345 1336 360 1327 369L977 719C968 728 953 729 944 720C935 711 936 696 945 687L1295 337C1304 328 1319 327 1328 336ZM1408 930C1408 917 1400 906 1388 901C1376 896 1363 898 1353 908L1289 972C1283 978 1280 986 1280 994V1120C1280 1208 1208 1280 1120 1280H288C200 1280 128 1208 128 1120V288C128 200 200 128 288 128H1120C1135 128 1150 130 1165 134C1176 138 1188 135 1197 126L1246 77C1254 69 1257 59 1255 48C1253 38 1246 29 1237 25C1200 8 1160 0 1120 0H288C129 0 0 129 0 288V1120C0 1279 129 1408 288 1408H1120C1279 1408 1408 1279 1408 1120ZM1312 192 640 864V1152H928L1600 480ZM1756 324C1793 287 1793 225 1756 188L1604 36C1567 -1 1505 -1 1468 36L1376 128L1664 416L1756 324Z"/></svg>
<svg style="left:1675px;top:13.8px" width="11" height="12" viewBox="0 0 1408 1536"><path fill="#111" d="M512 608C512 590 498 576 480 576H416C398 576 384 590 384 608V1184C384 1202 398 1216 416 1216H480C498 1216 512 1202 512 1184ZM768 608C768 590 754 576 736 576H672C654 576 640 590 640 608V1184C640 1202 654 1216 672 1216H736C754 1216 768 1202 768 1184ZM1024 608C1024 590 1010 576 992 576H928C910 576 896 590 896 608V1184C896 1202 910 1216 928 1216H992C1010 1216 1024 1202 1024 1184ZM1152 1332C1152 1380 1125 1408 1120 1408H288C283 1408 256 1380 256 1332V384H1152V1332ZM480 256 529 139C532 135 540 129 546 128H863C868 129 877 135 880 139L928 256ZM1408 288C1408 270 1394 256 1376 256H1067L997 89C977 40 917 0 864 0H544C491 0 431 40 411 89L341 256H32C14 256 0 270 0 288V352C0 370 14 384 32 384H128V1336C128 1446 200 1536 288 1536H1120C1208 1536 1280 1442 1280 1332V384H1376C1394 384 1408 370 1408 352Z"/></svg>
</div>
<div class="row ok" style="top:248px">
<div class="cb" style="left:12px;top:10px"></div>
<span class="t n" style="left:49.6px;top:12px;font-size:14px;line-height:16px;letter-spacing:0.2px;color:#3c3c3c;">Input Voltage</span>
<span class="t n" style="left:357.5px;top:12px;font-size:14px;line-height:16px;letter-spacing:-0.18px;color:#3c3c3c;">SNMP</span>
<span class="t n" style="left:564px;top:12px;font-size:14px;line-height:16px;color:#3c3c3c;">15</span>
<svg style="left:768px;top:9px" width="20" height="20" viewBox="0 0 20 20"><circle cx="10" cy="10" r="10" fill="#3cbe5b"/><path d="M5.7 10.2L8.7 13L14.2 7.4" fill="none" stroke="#fff" stroke-width="2.5" stroke-linecap="round" stroke-linejoin="round"/></svg>
<span class="t" style="left:795px;top:11px;font-size:14px;line-height:16px;letter-spacing:0.25px;">Normal</span>
<svg style="left:1597px;top:13px" width="14" height="14" viewBox="0 0 14 14"><path d="M0.6 0.1V13H13.6" fill="none" stroke="#111" stroke-width="1.1"/><path fill="#111" d="M2.7 7.2H4.8V10.7H2.7ZM6.5 4.7H8.9V10.7H6.5ZM10.2 2.7H12.2V10.7H10.2Z"/></svg>
<svg style="left:1622px;top:13.6px" width="14.4" height="13" viewBox="0 0 14.4 13"><rect x="0.7" y="0.7" width="13" height="9.6" rx="1.2" fill="none" stroke="#111" stroke-width="1.15"/><path fill="#111" d="M2.6 10.6H11.8L10.6 12.4H3.8Z"/></svg>
<svg style="left:1648.4px;top:13.8px" width="13.9" height="10.9" viewBox="0 0 1784 1408"><path fill="#111" d="M888 1056H832V960H736V904L852 788L1004 940ZM1328 336C1337 345 1336 360 1327 369L977 719C968 728 953 729 944 720C935 711 936 696 945 687L1295 337C1304 328 1319 327 1328 336ZM1408 930C1408 917 1400 906 1388 901C1376 896 1363 898 1353 908L1289 972C1283 978 1280 986 1280 994V1120C1280 1208 1208 1280 1120 1280H288C200 1280 128 1208 128 1120V288C128 200 200 128 288 128H1120C1135 128 1150 130 1165 134C1176 138 1188 135 1197 126L1246 77C1254 69 1257 59 1255 48C1253 38 1246 29 1237 25C1200 8 1160 0 1120 0H288C129 0 0 129 0 288V1120C0 1279 129 1408 288 1408H1120C1279 1408 1408 1279 1408 1120ZM1312 192 640 864V1152H928L1600 480ZM1756 324C1793 287 1793 225 1756 188L1604 36C1567 -1 1505 -1 1468 36L1376 128L1664 416L1756 324Z"/></svg>
<svg style="left:1675px;top:13.8px" width="11" height="12" viewBox="0 0 1408 1536"><path fill="#111" d="M512 608C512 590 498 576 480 576H416C398 576 384 590 384 608V1184C384 1202 398 1216 416 1216H480C498 1216 512 1202 512 1184ZM768 608C768 590 754 576 736 576H672C654 576 640 590 640 608V1184C640 1202 654 1216 672 1216H736C754 1216 768 1202 768 1184ZM1024 608C1024 590 1010 576 992 576H928C910 576 896 590 896 608V1184C896 1202 910 1216 928 1216H992C1010 1216 1024 1202 1024 1184ZM1152 1332C1152 1380 1125 1408 1120 1408H288C283 1408 256 1380 256 1332V384H1152V1332ZM480 256 529 139C532 135 540 129 546 128H863C868 129 877 135 880 139L928 256ZM1408 288C1408 270 1394 256 1376 256H1067L997 89C977 40 917 0 864 0H544C491 0 431 40 411 89L341 256H32C14 256 0 270 0 288V352C0 370 14 384 32 384H128V1336C128 1446 200 1536 288 1536H1120C1208 1536 1280 1442 1280 1332V384H1376C1394 384 1408 370 1408 352Z"/></svg>
</div>
<div class="row" style="top:289px">
<div class="cb" style="left:12px;top:10px"></div>
<span class="t n" style="left:49.6px;top:12px;font-size:14px;line-height:16px;letter-spacing:-0.09px;color:#3c3c3c;">IP Routing discards</span>
<span class="t n" style="left:357.5px;top:12px;font-size:14px;line-height:16px;letter-spacing:-0.18px;color:#3c3c3c;">SNMP</span>
<span class="t n" style="left:564px;top:12px;font-size:14px;line-height:16px;color:#3c3c3c;">60</span>
<svg style="left:768px;top:9px" width="20" height="20" viewBox="0 0 20 20"><circle cx="10" cy="10" r="10" fill="#8c8c8c"/><circle cx="10" cy="10" r="6.3" fill="none" stroke="#f2f2f2" stroke-width="1.5"/><path d="M5.6 7.2L14.4 12.8" stroke="#f2f2f2" stroke-width="1.5"/></svg>
<span class="t n" style="left:795px;top:11px;font-size:14px;line-height:16px;letter-spacing:-0.03px;color:#3c3c3c;">Not Enabled</span>
<svg style="left:1597px;top:13px" width="14" height="14" viewBox="0 0 14 14"><path d="M0.6 0.1V13H13.6" fill="none" stroke="#111" stroke-width="1.1"/><path fill="#111" d="M2.7 7.2H4.8V10.7H2.7ZM6.5 4.7H8.9V10.7H6.5ZM10.2 2.7H12.2V10.7H10.2Z"/></svg>
<svg style="left:1622px;top:13.6px" width="14.4" height="13" viewBox="0 0 14.4 13"><rect x="0.7" y="0.7" width="13" height="9.6" rx="1.2" fill="none" stroke="#111" stroke-width="1.15"/><path fill="#111" d="M2.6 10.6H11.8L10.6 12.4H3.8Z"/></svg>
<svg style="left:1648.4px;top:13.8px" width="13.9" height="10.9" viewBox="0 0 1784 1408"><path fill="#111" d="M888 1056H832V960H736V904L852 788L1004 940ZM1328 336C1337 345 1336 360 1327 369L977 719C968 728 953 729 944 720C935 711 936 696 945 687L1295 337C1304 328 1319 327 1328 336ZM1408 930C1408 917 1400 906 1388 901C1376 896 1363 898 1353 908L1289 972C1283 978 1280 986 1280 994V1120C1280 1208 1208 1280 1120 1280H288C200 1280 128 1208 128 1120V288C128 200 200 128 288 128H1120C1135 128 1150 130 1165 134C1176 138 1188 135 1197 126L1246 77C1254 69 1257 59 1255 48C1253 38 1246 29 1237 25C1200 8 1160 0 1120 0H288C129 0 0 129 0 288V1120C0 1279 129 1408 288 1408H1120C1279 1408 1408 1279 1408 1120ZM1312 192 640 864V1152H928L1600 480ZM1756 324C1793 287 1793 225 1756 188L1604 36C1567 -1 1505 -1 1468 36L1376 128L1664 416L1756 324Z"/></svg>
<svg style="left:1675px;top:13.8px" width="11" height="12" viewBox="0 0 1408 1536"><path fill="#111" d="M512 608C512 590 498 576 480 576H416C398 576 384 590 384 608V1184C384 1202 398 1216 416 1216H480C498 1216 512 1202 512 1184ZM768 608C768 590 754 576 736 576H672C654 576 640 590 640 608V1184C640 1202 654 1216 672 1216H736C754 1216 768 1202 768 1184ZM1024 608C1024 590 1010 576 992 576H928C910 576 896 590 896 608V1184C896 1202 910 1216 928 1216H992C1010 1216 1024 1202 1024 1184ZM1152 1332C1152 1380 1125 1408 1120 1408H288C283 1408 256 1380 256 1332V384H1152V1332ZM480 256 529 139C532 135 540 129 546 128H863C868 129 877 135 880 139L928 256ZM1408 288C1408 270 1394 256 1376 256H1067L997 89C977 40 917 0 864 0H544C491 0 431 40 411 89L341 256H32C14 256 0 270 0 288V352C0 370 14 384 32 384H128V1336C128 1446 200 1536 288 1536H1120C1208 1536 1280 1442 1280 1332V384H1376C1394 384 1408 370 1408 352Z"/></svg>
</div>
<div class="row" style="top:330px">
<div class="cb" style="left:12px;top:10px"></div>
<span class="t n" style="left:49.6px;top:12px;font-size:14px;line-height:16px;letter-spacing:0.39px;color:#3c3c3c;">Memory Utilization</span>
<span class="t n" style="left:357.5px;top:12px;font-size:14px;line-height:16px;letter-spacing:-0.18px;color:#3c3c3c;">SNMP</span>
<span class="t n" style="left:564px;top:12px;font-size:14px;line-height:16px;color:#3c3c3c;">15</span>
<svg style="left:768px;top:9px" width="20" height="20" viewBox="0 0 20 20"><circle cx="10" cy="10" r="10" fill="#8c8c8c"/><circle cx="10" cy="10" r="6.3" fill="none" stroke="#f2f2f2" stroke-width="1.5"/><path d="M5.6 7.2L14.4 12.8" stroke="#f2f2f2" stroke-width="1.5"/></svg>
<span class="t n" style="left:795px;top:11px;font-size:14px;line-height:16px;letter-spacing:-0.03px;color:#3c3c3c;">Not Enabled</span>
<svg style="left:1597px;top:13px" width="14" height="14" viewBox="0 0 14 14"><path d="M0.6 0.1V13H13.6" fill="none" stroke="#111" stroke-width="1.1"/><path fill="#111" d="M2.7 7.2H4.8V10.7H2.7ZM6.5 4.7H8.9V10.7H6.5ZM10.2 2.7H12.2V10.7H10.2Z"/></svg>
<svg style="left:1622px;top:13.6px" width="14.4" height="13" viewBox="0 0 14.4 13"><rect x="0.7" y="0.7" width="13" height="9.6" rx="1.2" fill="none" stroke="#111" stroke-width="1.15"/><path fill="#111" d="M2.6 10.6H11.8L10.6 12.4H3.8Z"/></svg>
<svg style="left:1648.4px;top:13.8px" width="13.9" height="10.9" viewBox="0 0 1784 1408"><path fill="#111" d="M888 1056H832V960H736V904L852 788L1004 940ZM1328 336C1337 345 1336 360 1327 369L977 719C968 728 953 729 944 720C935 711 936 696 945 687L1295 337C1304 328 1319 327 1328 336ZM1408 930C1408 917 1400 906 1388 901C1376 896 1363 898 1353 908L1289 972C1283 978 1280 986 1280 994V1120C1280 1208 1208 1280 1120 1280H288C200 1280 128 1208 128 1120V288C128 200 200 128 288 128H1120C1135 128 1150 130 1165 134C1176 138 1188 135 1197 126L1246 77C1254 69 1257 59 1255 48C1253 38 1246 29 1237 25C1200 8 1160 0 1120 0H288C129 0 0 129 0 288V1120C0 1279 129 1408 288 1408H1120C1279 1408 1408 1279 1408 1120ZM1312 192 640 864V1152H928L1600 480ZM1756 324C1793 287 1793 225 1756 188L1604 36C1567 -1 1505 -1 1468 36L1376 128L1664 416L1756 324Z"/></svg>
<svg style="left:1675px;top:13.8px" width="11" height="12" viewBox="0 0 1408 1536"><path fill="#111" d="M512 608C512 590 498 576 480 576H416C398 576 384 590 384 608V1184C384 1202 398 1216 416 1216H480C498 1216 512 1202 512 1184ZM768 608C768 590 754 576 736 576H672C654 576 640 590 640 608V1184C640 1202 654 1216 672 1216H736C754 1216 768 1202 768 1184ZM1024 608C1024 590 1010 576 992 576H928C910 576 896 590 896 608V1184C896 1202 910 1216 928 1216H992C1010 1216 1024 1202 1024 1184ZM1152 1332C1152 1380 1125 1408 1120 1408H288C283 1408 256 1380 256 1332V384H1152V1332ZM480 256 529 139C532 135 540 129 546 128H863C868 129 877 135 880 139L928 256ZM1408 288C1408 270 1394 256 1376 256H1067L997 89C977 40 917 0 864 0H544C491 0 431 40 411 89L341 256H32C14 256 0 270 0 288V352C0 370 14 384 32 384H128V1336C128 1446 200 1536 288 1536H1120C1208 1536 1280 1442 1280 1332V384H1376C1394 384 1408 370 1408 352Z"/></svg>
</div>
<div class="row" style="top:371px">
<div class="cb" style="left:12px;top:10px"></div>
<span class="t n" style="left:49.6px;top:12px;font-size:14px;line-height:16px;letter-spacing:0.29px;color:#3c3c3c;">Network Interfaces</span>
<span class="t n" style="left:357.5px;top:12px;font-size:14px;line-height:16px;letter-spacing:-0.18px;color:#3c3c3c;">SNMP</span>
<span class="t n" style="left:564px;top:12px;font-size:14px;line-height:16px;color:#3c3c3c;">60</span>
<svg style="left:768px;top:9px" width="20" height="20" viewBox="0 0 20 20"><circle cx="10" cy="10" r="10" fill="#8c8c8c"/><circle cx="10" cy="10" r="6.3" fill="none" stroke="#f2f2f2" stroke-width="1.5"/><path d="M5.6 7.2L14.4 12.8" stroke="#f2f2f2" stroke-width="1.5"/></svg>
<span class="t n" style="left:795px;top:11px;font-size:14px;line-height:16px;letter-spacing:-0.03px;color:#3c3c3c;">Not Enabled</span>
<svg style="left:1597px;top:13px" width="14" height="14" viewBox="0 0 14 14"><path d="M0.6 0.1V13H13.6" fill="none" stroke="#111" stroke-width="1.1"/><path fill="#111" d="M2.7 7.2H4.8V10.7H2.7ZM6.5 4.7H8.9V10.7H6.5ZM10.2 2.7H12.2V10.7H10.2Z"/></svg>
<svg style="left:1622px;top:13.6px" width="14.4" height="13" viewBox="0 0 14.4 13"><rect x="0.7" y="0.7" width="13" height="9.6" rx="1.2" fill="none" stroke="#111" stroke-width="1.15"/><path fill="#111" d="M2.6 10.6H11.8L10.6 12.4H3.8Z"/></svg>
<svg style="left:1648.4px;top:13.8px" width="13.9" height="10.9" viewBox="0 0 1784 1408"><path fill="#111" d="M888 1056H832V960H736V904L852 788L1004 940ZM1328 336C1337 345 1336 360 1327 369L977 719C968 728 953 729 944 720C935 711 936 696 945 687L1295 337C1304 328 1319 327 1328 336ZM1408 930C1408 917 1400 906 1388 901C1376 896 1363 898 1353 908L1289 972C1283 978 1280 986 1280 994V1120C1280 1208 1208 1280 1120 1280H288C200 1280 128 1208 128 1120V288C128 200 200 128 288 128H1120C1135 128 1150 130 1165 134C1176 138 1188 135 1197 126L1246 77C1254 69 1257 59 1255 48C1253 38 1246 29 1237 25C1200 8 1160 0 1120 0H288C129 0 0 129 0 288V1120C0 1279 129 1408 288 1408H1120C1279 1408 1408 1279 1408 1120ZM1312 192 640 864V1152H928L1600 480ZM1756 324C1793 287 1793 225 1756 188L1604 36C1567 -1 1505 -1 1468 36L1376 128L1664 416L1756 324Z"/></svg>
<svg style="left:1675px;top:13.8px" width="11" height="12" viewBox="0 0 1408 1536"><path fill="#111" d="M512 608C512 590 498 576 480 576H416C398 576 384 590 384 608V1184C384 1202 398 1216 416 1216H480C498 1216 512 1202 512 1184ZM768 608C768 590 754 576 736 576H672C654 576 640 590 640 608V1184C640 1202 654 1216 672 1216H736C754 1216 768 1202 768 1184ZM1024 608C1024 590 1010 576 992 576H928C910 576 896 590 896 608V1184C896 1202 910 1216 928 1216H992C1010 1216 1024 1202 1024 1184ZM1152 1332C1152 1380 1125 1408 1120 1408H288C283 1408 256 1380 256 1332V384H1152V1332ZM480 256 529 139C532 135 540 129 546 128H863C868 129 877 135 880 139L928 256ZM1408 288C1408 270 1394 256 1376 256H1067L997 89C977 40 917 0 864 0H544C491 0 431 40 411 89L341 256H32C14 256 0 270 0 288V352C0 370 14 384 32 384H128V1336C128 1446 200 1536 288 1536H1120C1208 1536 1280 1442 1280 1332V384H1376C1394 384 1408 370 1408 352Z"/></svg>
</div>
<div class="row hov ok" style="top:412px">
<div class="cb" style="left:12px;top:10px"></div>
<span class="t n" style="left:49.6px;top:12px;font-size:14px;line-height:16px;letter-spacing:-0.06px;color:#3c3c3c;">Probe Read Server Temperature</span>
<span class="t n" style="left:357.5px;top:12px;font-size:14px;line-height:16px;letter-spacing:-0.18px;color:#3c3c3c;">SNMP</span>
<span class="t n" style="left:564px;top:12px;font-size:14px;line-height:16px;color:#3c3c3c;">15</span>
<svg style="left:768px;top:9px" width="20" height="20" viewBox="0 0 20 20"><circle cx="10" cy="10" r="10" fill="#3cbe5b"/><path d="M5.7 10.2L8.7 13L14.2 7.4" fill="none" stroke="#fff" stroke-width="2.5" stroke-linecap="round" stroke-linejoin="round"/></svg>
<span class="t" style="left:795px;top:11px;font-size:14px;line-height:16px;letter-spacing:0.25px;">Normal</span>
<svg style="left:1597px;top:13px" width="14" height="14" viewBox="0 0 14 14"><path d="M0.6 0.1V13H13.6" fill="none" stroke="#111" stroke-width="1.1"/><path fill="#111" d="M2.7 7.2H4.8V10.7H2.7ZM6.5 4.7H8.9V10.7H6.5ZM10.2 2.7H12.2V10.7H10.2Z"/></svg>
<svg style="left:1622px;top:13.6px" width="14.4" height="13" viewBox="0 0 14.4 13"><rect x="0.7" y="0.7" width="13" height="9.6" rx="1.2" fill="none" stroke="#111" stroke-width="1.15"/><path fill="#111" d="M2.6 10.6H11.8L10.6 12.4H3.8Z"/></svg>
<svg style="left:1648.4px;top:13.8px" width="13.9" height="10.9" viewBox="0 0 1784 1408"><path fill="#111" d="M888 1056H832V960H736V904L852 788L1004 940ZM1328 336C1337 345 1336 360 1327 369L977 719C968 728 953 729 944 720C935 711 936 696 945 687L1295 337C1304 328 1319 327 1328 336ZM1408 930C1408 917 1400 906 1388 901C1376 896 1363 898 1353 908L1289 972C1283 978 1280 986 1280 994V1120C1280 1208 1208 1280 1120 1280H288C200 1280 128 1208 128 1120V288C128 200 200 128 288 128H1120C1135 128 1150 130 1165 134C1176 138 1188 135 1197 126L1246 77C1254 69 1257 59 1255 48C1253 38 1246 29 1237 25C1200 8 1160 0 1120 0H288C129 0 0 129 0 288V1120C0 1279 129 1408 288 1408H1120C1279 1408 1408 1279 1408 1120ZM1312 192 640 864V1152H928L1600 480ZM1756 324C1793 287 1793 225 1756 188L1604 36C1567 -1 1505 -1 1468 36L1376 128L1664 416L1756 324Z"/></svg>
<svg style="left:1675px;top:13.8px" width="11" height="12" viewBox="0 0 1408 1536"><path fill="#111" d="M512 608C512 590 498 576 480 576H416C398 576 384 590 384 608V1184C384 1202 398 1216 416 1216H480C498 1216 512 1202 512 1184ZM768 608C768 590 754 576 736 576H672C654 576 640 590 640 608V1184C640 1202 654 1216 672 1216H736C754 1216 768 1202 768 1184ZM1024 608C1024 590 1010 576 992 576H928C910 576 896 590 896 608V1184C896 1202 910 1216 928 1216H992C1010 1216 1024 1202 1024 1184ZM1152 1332C1152 1380 1125 1408 1120 1408H288C283 1408 256 1380 256 1332V384H1152V1332ZM480 256 529 139C532 135 540 129 546 128H863C868 129 877 135 880 139L928 256ZM1408 288C1408 270 1394 256 1376 256H1067L997 89C977 40 917 0 864 0H544C491 0 431 40 411 89L341 256H32C14 256 0 270 0 288V352C0 370 14 384 32 384H128V1336C128 1446 200 1536 288 1536H1120C1208 1536 1280 1442 1280 1332V384H1376C1394 384 1408 370 1408 352Z"/></svg>
</div>
<div class="row" style="top:453px">
<div class="cb" style="left:12px;top:10px"></div>
<span class="t n" style="left:49.6px;top:12px;font-size:14px;line-height:16px;letter-spacing:-0.11px;color:#3c3c3c;">Process Count</span>
<span class="t n" style="left:357.5px;top:12px;font-size:14px;line-height:16px;letter-spacing:-0.18px;color:#3c3c3c;">SNMP</span>
<span class="t n" style="left:564px;top:12px;font-size:14px;line-height:16px;color:#3c3c3c;">15</span>
<svg style="left:768px;top:9px" width="20" height="20" viewBox="0 0 20 20"><circle cx="10" cy="10" r="10" fill="#8c8c8c"/><circle cx="10" cy="10" r="6.3" fill="none" stroke="#f2f2f2" stroke-width="1.5"/><path d="M5.6 7.2L14.4 12.8" stroke="#f2f2f2" stroke-width="1.5"/></svg>
<span class="t n" style="left:795px;top:11px;font-size:14px;line-height:16px;letter-spacing:-0.03px;color:#3c3c3c;">Not Enabled</span>
<svg style="left:1597px;top:13px" width="14" height="14" viewBox="0 0 14 14"><path d="M0.6 0.1V13H13.6" fill="none" stroke="#111" stroke-width="1.1"/><path fill="#111" d="M2.7 7.2H4.8V10.7H2.7ZM6.5 4.7H8.9V10.7H6.5ZM10.2 2.7H12.2V10.7H10.2Z"/></svg>
<svg style="left:1622px;top:13.6px" width="14.4" height="13" viewBox="0 0 14.4 13"><rect x="0.7" y="0.7" width="13" height="9.6" rx="1.2" fill="none" stroke="#111" stroke-width="1.15"/><path fill="#111" d="M2.6 10.6H11.8L10.6 12.4H3.8Z"/></svg>
<svg style="left:1648.4px;top:13.8px" width="13.9" height="10.9" viewBox="0 0 1784 1408"><path fill="#111" d="M888 1056H832V960H736V904L852 788L1004 940ZM1328 336C1337 345 1336 360 1327 369L977 719C968 728 953 729 944 720C935 711 936 696 945 687L1295 337C1304 328 1319 327 1328 336ZM1408 930C1408 917 1400 906 1388 901C1376 896 1363 898 1353 908L1289 972C1283 978 1280 986 1280 994V1120C1280 1208 1208 1280 1120 1280H288C200 1280 128 1208 128 1120V288C128 200 200 128 288 128H1120C1135 128 1150 130 1165 134C1176 138 1188 135 1197 126L1246 77C1254 69 1257 59 1255 48C1253 38 1246 29 1237 25C1200 8 1160 0 1120 0H288C129 0 0 129 0 288V1120C0 1279 129 1408 288 1408H1120C1279 1408 1408 1279 1408 1120ZM1312 192 640 864V1152H928L1600 480ZM1756 324C1793 287 1793 225 1756 188L1604 36C1567 -1 1505 -1 1468 36L1376 128L1664 416L1756 324Z"/></svg>
<svg style="left:1675px;top:13.8px" width="11" height="12" viewBox="0 0 1408 1536"><path fill="#111" d="M512 608C512 590 498 576 480 576H416C398 576 384 590 384 608V1184C384 1202 398 1216 416 1216H480C498 1216 512 1202 512 1184ZM768 608C768 590 754 576 736 576H672C654 576 640 590 640 608V1184C640 1202 654 1216 672 1216H736C754 1216 768 1202 768 1184ZM1024 608C1024 590 1010 576 992 576H928C910 576 896 590 896 608V1184C896 1202 910 1216 928 1216H992C1010 1216 1024 1202 1024 1184ZM1152 1332C1152 1380 1125 1408 1120 1408H288C283 1408 256 1380 256 1332V384H1152V1332ZM480 256 529 139C532 135 540 129 546 128H863C868 129 877 135 880 139L928 256ZM1408 288C1408 270 1394 256 1376 256H1067L997 89C977 40 917 0 864 0H544C491 0 431 40 411 89L341 256H32C14 256 0 270 0 288V352C0 370 14 384 32 384H128V1336C128 1446 200 1536 288 1536H1120C1208 1536 1280 1442 1280 1332V384H1376C1394 384 1408 370 1408 352Z"/></svg>
</div>
<div class="row" style="top:494px">
<div class="cb" style="left:12px;top:10px"></div>
<span class="t n" style="left:49.6px;top:12px;font-size:14px;line-height:16px;letter-spacing:-0.09px;color:#3c3c3c;">Processor Queue Length</span>
<span class="t n" style="left:357.5px;top:12px;font-size:14px;line-height:16px;letter-spacing:1.27px;color:#3c3c3c;">WMI</span>
<span class="t n" style="left:564px;top:12px;font-size:14px;line-height:16px;color:#3c3c3c;">15</span>
<svg style="left:768px;top:9px" width="20" height="20" viewBox="0 0 20 20"><circle cx="10" cy="10" r="10" fill="#8c8c8c"/><circle cx="10" cy="10" r="6.3" fill="none" stroke="#f2f2f2" stroke-width="1.5"/><path d="M5.6 7.2L14.4 12.8" stroke="#f2f2f2" stroke-width="1.5"/></svg>
<span class="t n" style="left:795px;top:11px;font-size:14px;line-height:16px;letter-spacing:-0.03px;color:#3c3c3c;">Not Enabled</span>
<svg style="left:1597px;top:13px" width="14" height="14" viewBox="0 0 14 14"><path d="M0.6 0.1V13H13.6" fill="none" stroke="#111" stroke-width="1.1"/><path fill="#111" d="M2.7 7.2H4.8V10.7H2.7ZM6.5 4.7H8.9V10.7H6.5ZM10.2 2.7H12.2V10.7H10.2Z"/></svg>
<svg style="left:1622px;top:13.6px" width="14.4" height="13" viewBox="0 0 14.4 13"><rect x="0.7" y="0.7" width="13" height="9.6" rx="1.2" fill="none" stroke="#111" stroke-width="1.15"/><path fill="#111" d="M2.6 10.6H11.8L10.6 12.4H3.8Z"/></svg>
<svg style="left:1648.4px;top:13.8px" width="13.9" height="10.9" viewBox="0 0 1784 1408"><path fill="#111" d="M888 1056H832V960H736V904L852 788L1004 940ZM1328 336C1337 345 1336 360 1327 369L977 719C968 728 953 729 944 720C935 711 936 696 945 687L1295 337C1304 328 1319 327 1328 336ZM1408 930C1408 917 1400 906 1388 901C1376 896 1363 898 1353 908L1289 972C1283 978 1280 986 1280 994V1120C1280 1208 1208 1280 1120 1280H288C200 1280 128 1208 128 1120V288C128 200 200 128 288 128H1120C1135 128 1150 130 1165 134C1176 138 1188 135 1197 126L1246 77C1254 69 1257 59 1255 48C1253 38 1246 29 1237 25C1200 8 1160 0 1120 0H288C129 0 0 129 0 288V1120C0 1279 129 1408 288 1408H1120C1279 1408 1408 1279 1408 1120ZM1312 192 640 864V1152H928L1600 480ZM1756 324C1793 287 1793 225 1756 188L1604 36C1567 -1 1505 -1 1468 36L1376 128L1664 416L1756 324Z"/></svg>
<svg style="left:1675px;top:13.8px" width="11" height="12" viewBox="0 0 1408 1536"><path fill="#111" d="M512 608C512 590 498 576 480 576H416C398 576 384 590 384 608V1184C384 1202 398 1216 416 1216H480C498 1216 512 1202 512 1184ZM768 608C768 590 754 576 736 576H672C654 576 640 590 640 608V1184C640 1202 654 1216 672 1216H736C754 1216 768 1202 768 1184ZM1024 608C1024 590 1010 576 992 576H928C910 576 896 590 896 608V1184C896 1202 910 1216 928 1216H992C1010 1216 1024 1202 1024 1184ZM1152 1332C1152 1380 1125 1408 1120 1408H288C283 1408 256 1380 256 1332V384H1152V1332ZM480 256 529 139C532 135 540 129 546 128H863C868 129 877 135 880 139L928 256ZM1408 288C1408 270 1394 256 1376 256H1067L997 89C977 40 917 0 864 0H544C491 0 431 40 411 89L341 256H32C14 256 0 270 0 288V352C0 370 14 384 32 384H128V1336C128 1446 200 1536 288 1536H1120C1208 1536 1280 1442 1280 1332V384H1376C1394 384 1408 370 1408 352Z"/></svg>
</div>
<div class="row" style="top:535px">
<div class="cb" style="left:12px;top:10px"></div>
<span class="t n" style="left:49.6px;top:12px;font-size:14px;line-height:16px;letter-spacing:-0.22px;color:#3c3c3c;">SysUpTime</span>
<span class="t n" style="left:357.5px;top:12px;font-size:14px;line-height:16px;letter-spacing:-0.18px;color:#3c3c3c;">SNMP</span>
<span class="t n" style="left:564px;top:12px;font-size:14px;line-height:16px;color:#3c3c3c;">15</span>
<svg style="left:768px;top:9px" width="20" height="20" viewBox="0 0 20 20"><circle cx="10" cy="10" r="10" fill="#8c8c8c"/><circle cx="10" cy="10" r="6.3" fill="none" stroke="#f2f2f2" stroke-width="1.5"/><path d="M5.6 7.2L14.4 12.8" stroke="#f2f2f2" stroke-width="1.5"/></svg>
<span class="t n" style="left:795px;top:11px;font-size:14px;line-height:16px;letter-spacing:-0.03px;color:#3c3c3c;">Not Enabled</span>
<svg style="left:1597px;top:13px" width="14" height="14" viewBox="0 0 14 14"><path d="M0.6 0.1V13H13.6" fill="none" stroke="#111" stroke-width="1.1"/><path fill="#111" d="M2.7 7.2H4.8V10.7H2.7ZM6.5 4.7H8.9V10.7H6.5ZM10.2 2.7H12.2V10.7H10.2Z"/></svg>
<svg style="left:1622px;top:13.6px" width="14.4" height="13" viewBox="0 0 14.4 13"><rect x="0.7" y="0.7" width="13" height="9.6" rx="1.2" fill="none" stroke="#111" stroke-width="1.15"/><path fill="#111" d="M2.6 10.6H11.8L10.6 12.4H3.8Z"/></svg>
<svg style="left:1648.4px;top:13.8px" width="13.9" height="10.9" viewBox="0 0 1784 1408"><path fill="#111" d="M888 1056H832V960H736V904L852 788L1004 940ZM1328 336C1337 345 1336 360 1327 369L977 719C968 728 953 729 944 720C935 711 936 696 945 687L1295 337C1304 328 1319 327 1328 336ZM1408 930C1408 917 1400 906 1388 901C1376 896 1363 898 1353 908L1289 972C1283 978 1280 986 1280 994V1120C1280 1208 1208 1280 1120 1280H288C200 1280 128 1208 128 1120V288C128 200 200 128 288 128H1120C1135 128 1150 130 1165 134C1176 138 1188 135 1197 126L1246 77C1254 69 1257 59 1255 48C1253 38 1246 29 1237 25C1200 8 1160 0 1120 0H288C129 0 0 129 0 288V1120C0 1279 129 1408 288 1408H1120C1279 1408 1408 1279 1408 1120ZM1312 192 640 864V1152H928L1600 480ZM1756 324C1793 287 1793 225 1756 188L1604 36C1567 -1 1505 -1 1468 36L1376 128L1664 416L1756 324Z"/></svg>
<svg style="left:1675px;top:13.8px" width="11" height="12" viewBox="0 0 1408 1536"><path fill="#111" d="M512 608C512 590 498 576 480 576H416C398 576 384 590 384 608V1184C384 1202 398 1216 416 1216H480C498 1216 512 1202 512 1184ZM768 608C768 590 754 576 736 576H672C654 576 640 590 640 608V1184C640 1202 654 1216 672 1216H736C754 1216 768 1202 768 1184ZM1024 608C1024 590 1010 576 992 576H928C910 576 896 590 896 608V1184C896 1202 910 1216 928 1216H992C1010 1216 1024 1202 1024 1184ZM1152 1332C1152 1380 1125 1408 1120 1408H288C283 1408 256 1380 256 1332V384H1152V1332ZM480 256 529 139C532 135 540 129 546 128H863C868 129 877 135 880 139L928 256ZM1408 288C1408 270 1394 256 1376 256H1067L997 89C977 40 917 0 864 0H544C491 0 431 40 411 89L341 256H32C14 256 0 270 0 288V352C0 370 14 384 32 384H128V1336C128 1446 200 1536 288 1536H1120C1208 1536 1280 1442 1280 1332V384H1376C1394 384 1408 370 1408 352Z"/></svg>
</div>
</div>
<div id="sb"><b></b></div>
</body>
</html>
